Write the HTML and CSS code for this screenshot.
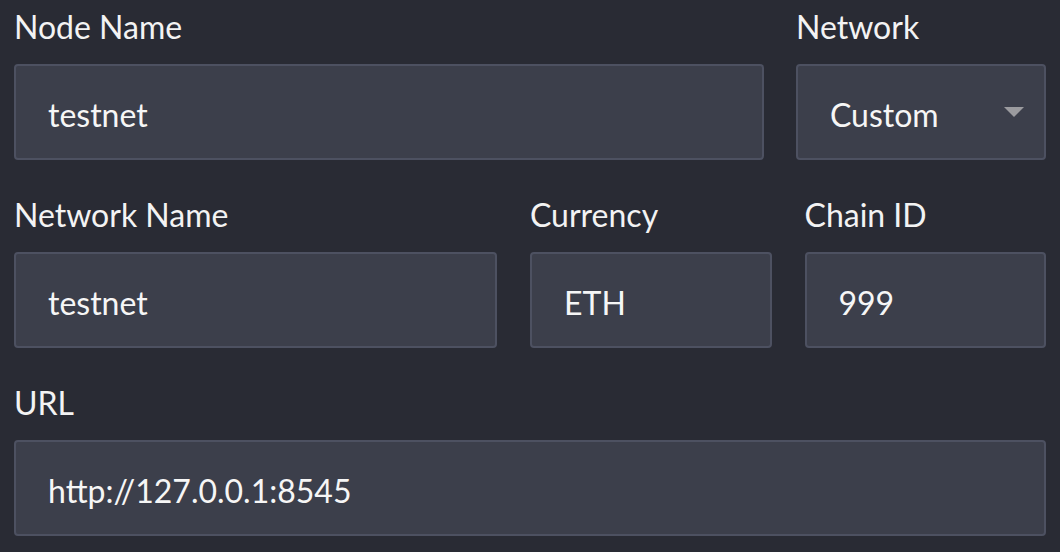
FILE: index.html
```html
<!DOCTYPE html>
<html>
<head>
<meta charset="utf-8">
<link rel="stylesheet" href="styles.css">
</head>
<body>
<form class="form">
  <div class="row">
    <div class="field f3">
      <label class="label">Node Name</label>
      <div class="input">testnet</div>
    </div>
    <div class="field f1">
      <label class="label">Network</label>
      <div class="input select">Custom<span class="caret"></span></div>
    </div>
  </div>
  <div class="row row-three">
    <div class="field f2">
      <label class="label">Network Name</label>
      <div class="input">testnet</div>
    </div>
    <div class="field f1">
      <label class="label">Currency</label>
      <div class="input">ETH</div>
    </div>
    <div class="field f1">
      <label class="label">Chain ID</label>
      <div class="input">999</div>
    </div>
  </div>
  <div class="row">
    <div class="field f1">
      <label class="label">URL</label>
      <div class="input">http://127.0.0.1:8545</div>
    </div>
  </div>
</form>
</body>
</html>
```
FILE: styles.css
```css
html, body {
  margin: 0;
  padding: 0;
  background: #292b34;
  width: 1060px;
  height: 552px;
  overflow: hidden;
}
.form {
  display: flex;
  flex-direction: column;
  gap: 36px;
  padding: 8px 14px 0 14px;
  font-family: Lato, "Open Sans", sans-serif;
  color: #f3f3f3;
}
.row {
  display: flex;
  gap: 32px;
}
.row-three {
  gap: 33px;
}
.field {
  display: flex;
  flex-direction: column;
  min-width: 0;
}
.f1 { flex: 1 1 0; }
.f2 { flex: 2 1 0; }
.f3 { flex: 3 1 0; }
.label {
  font-size: 32px;
  line-height: 38px;
  margin-bottom: 18px;
}
.input {
  box-sizing: border-box;
  height: 96px;
  background: #3c3f4b;
  border: 2px solid #4d5161;
  border-radius: 4px;
  padding: 4px 32px 0 32px;
  font-size: 32px;
  display: flex;
  align-items: center;
  color: #f6f6f6;
}
.select {
  justify-content: space-between;
}
.caret {
  width: 0;
  height: 0;
  border-left: 10px solid transparent;
  border-right: 10px solid transparent;
  border-top: 10px solid #9b9b9f;
  margin-right: -12px;
  margin-top: -4px;
}
```
